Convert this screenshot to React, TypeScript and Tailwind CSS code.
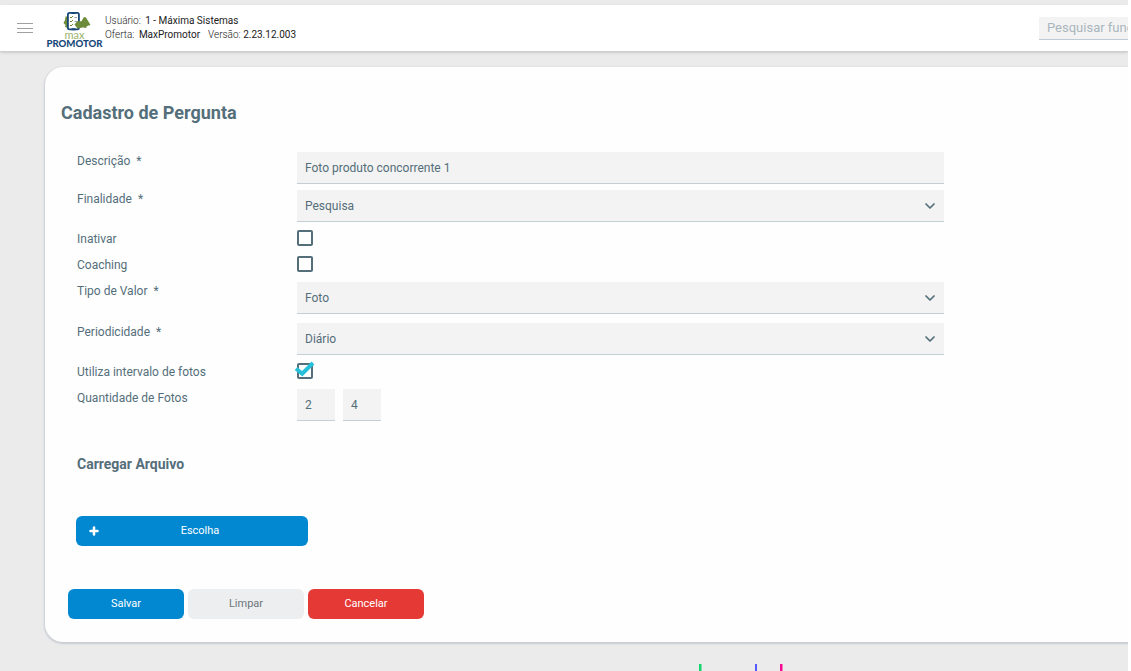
import React, { useState } from "react";
import { ChevronDown, Plus } from "lucide-react";

const fieldClass =
  "h-8 w-full appearance-none rounded-none border-0 border-b border-[#c3ced5] bg-[#f3f3f3] px-2 text-xs text-[#546e7a] outline-none";

type RowProps = {
  label: string;
  id: string;
  height: string;
  required?: boolean;
  children: React.ReactNode;
};

function Row({ label, id, height, required = false, children }: RowProps) {
  return (
    <div className={`flex items-start ${height}`}>
      <label htmlFor={id} className="w-[220px] shrink-0 pt-px text-xs leading-4 text-[#546e7a]">
        {label}
        {required && <span className="ml-1.5">*</span>}
      </label>
      <div className="flex min-w-0 flex-1 gap-2">{children}</div>
    </div>
  );
}

function Select({ id, options }: { id: string; options: string[] }) {
  return (
    <div className="relative w-full">
      <select id={id} className={fieldClass}>
        {options.map((option) => (
          <option key={option}>{option}</option>
        ))}
      </select>
      <ChevronDown className="pointer-events-none absolute top-2 right-1.5 size-4 text-[#546e7a]" strokeWidth={2.6} />
    </div>
  );
}

function Checkbox({ id, initial = false }: { id: string; initial?: boolean }) {
  const [checked, setChecked] = useState(initial);
  return (
    <div className="relative size-4">
      <input
        id={id}
        type="checkbox"
        checked={checked}
        onChange={(event) => setChecked(event.target.checked)}
        className="block size-4 appearance-none rounded-[2px] border-2 border-[#546e7a] bg-white"
      />
      {checked && (
        <svg viewBox="0 0 20 18" className="pointer-events-none absolute -top-0.5 -left-0.5 h-[18px] w-5" fill="none">
          <path d="M1 7.500 7.200 12.700 18 2" stroke="#26c0da" strokeWidth="4" />
        </svg>
      )}
    </div>
  );
}

function Logo() {
  return (
    <svg viewBox="0 0 58 40" className="h-10 w-[58px]" role="img" aria-label="max Promotor">
      <path d="M22 8.500h-2.500L19 12l-1.500 3 2 2-.5 2 3 1z" fill="#6d8c3a" />
      <path d="M31 13l4 1 3-5 2 .5L44.500 17 41 18l-1 2-5-1-4 1z" fill="#6d8c3a" />
      <rect x="21.900" y="4.900" width="11" height="16.500" rx="1.600" fill="#fff" stroke="#174779" strokeWidth="1.800" />
      <path d="M25.500 5h4M25.500 21.300h4" stroke="#174779" strokeWidth="2" />
      <path d="m24 9 1 1 2-2m-3 5 1 1 2-2m-3 5 1 1 2-2" fill="none" stroke="#6d8c3a" strokeWidth="1" />
      <path d="M28.500 9.500H31M28.500 13.500H31" stroke="#8aa0b8" strokeWidth="1" />
      <path d="m28.500 16.500 3-3.500 5 .5v6l-5 1z" fill="#6d8c3a" />
      <text x="28.500" y="31" textAnchor="middle" fontFamily="Lato, sans-serif" fontSize="11" fontWeight="400" fill="#9ab36b">
        max
      </text>
      <text x="28.500" y="39" textAnchor="middle" fontFamily="Lato, sans-serif" fontSize="9.600" fontWeight="900" fill="#174779">
        PROMOTOR
      </text>
    </svg>
  );
}

export default function App() {
  return (
    <div className="min-h-screen bg-white pr-[3px] font-[Roboto,sans-serif] text-[#546e7a]">
      <div className="flex min-h-screen flex-col overflow-hidden bg-[#ebebeb] pt-[5px]">
        <header className="flex h-[47px] shrink-0 items-center border-b border-[#cfcfcf] bg-white pl-4 shadow-sm">
          <button type="button" aria-label="Menu" className="flex h-6 w-[30px] items-center">
            <svg viewBox="0 0 17 10" className="h-2.5 w-[17px]" stroke="#a0a0a0" strokeWidth="1">
              <path d="M1 .5h16M1 5.500h16M1 9.500h16" />
            </svg>
          </button>
          <Logo />
          <div className="ml-px text-[10px] leading-[14px] whitespace-nowrap text-[#212121]">
            <p className="font-light">
              Usuário: <span className="ml-0.5 font-normal">1 - Máxima Sistemas</span>
            </p>
            <p className="font-light">
              Oferta: <span className="ml-0.5 font-normal">MaxPromotor</span>
              <span className="ml-2">Versão: </span>
              <span className="font-normal">2.23.12.003</span>
            </p>
          </div>
          <input
            type="text"
            aria-label="Pesquisar"
            placeholder="Pesquisar func"
            className="ml-auto h-[23px] w-[89px] border-b border-[#bccbd4] bg-[#f3f3f3] pl-2 text-[13px] outline-none placeholder:text-[#a9b6bd]"
          />
        </header>

        <main className="mt-[15px] ml-[45px] rounded-l-[18px] bg-[#fefefe] pt-[34px] pb-[23px] pl-4 shadow-[0_1px_2px_1px_#c8ccd2]">
          <h1 className="text-lg leading-6 font-bold">Cadastro de Pergunta</h1>
          <form onSubmit={(event) => event.preventDefault()}>
            <div className="mt-[27px] mr-[184px] ml-4">
              <Row label="Descrição" required id="descricao" height="h-[38px]">
                <input id="descricao" type="text" defaultValue="Foto produto concorrente 1" className={fieldClass} />
              </Row>
              <Row label="Finalidade" required id="finalidade" height="h-10">
                <Select id="finalidade" options={["Pesquisa"]} />
              </Row>
              <Row label="Inativar" id="inativar" height="h-[26px]">
                <Checkbox id="inativar" />
              </Row>
              <Row label="Coaching" id="coaching" height="h-[26px]">
                <Checkbox id="coaching" />
              </Row>
              <Row label="Tipo de Valor" required id="tipo" height="h-[41px]">
                <Select id="tipo" options={["Foto"]} />
              </Row>
              <Row label="Periodicidade" required id="periodicidade" height="h-10">
                <Select id="periodicidade" options={["Diário"]} />
              </Row>
              <Row label="Utiliza intervalo de fotos" id="intervalo" height="h-[26px]">
                <Checkbox id="intervalo" initial />
              </Row>
              <Row label="Quantidade de Fotos" id="quantidade" height="h-8">
                <div className="w-[38px]">
                  <input id="quantidade" type="text" defaultValue="2" className={fieldClass} />
                </div>
                <div className="w-[38px]">
                  <input aria-label="Quantidade máxima" type="text" defaultValue="4" className={fieldClass} />
                </div>
              </Row>
            </div>

            <h2 className="mt-[33px] ml-4 text-sm leading-5 font-bold">Carregar Arquivo</h2>
            <button
              type="button"
              className="mt-[42px] ml-[15px] flex h-[30px] w-[232px] items-center rounded-md bg-[#0288d1] px-3 text-[11px] text-white"
            >
              <Plus className="size-3" strokeWidth={5} />
              <span className="flex-1 pl-1 text-center">Escolha</span>
            </button>

            <div className="mt-[43px] ml-[7px] flex gap-1 text-[11px]">
              <button type="submit" className="h-[30px] w-[116px] rounded-md bg-[#0288d1] text-white">
                Salvar
              </button>
              <button type="reset" className="h-[30px] w-[116px] rounded-md bg-[#eceeef] text-[#6c757d]">
                Limpar
              </button>
              <button type="button" className="h-[30px] w-[116px] rounded-md bg-[#e53935] text-white">
                Cancelar
              </button>
            </div>
          </form>
        </main>

        <footer className="flex flex-1 items-end pl-[699px]">
          <svg viewBox="0 0 84 7" className="h-[7px] w-[84px]" aria-hidden="true">
            <path d="M0 0h2.500v7H0z" fill="#10d66b" />
            <path d="M56 0h2v7h-2z" fill="#5858ff" />
            <path d="M81 0h2.500v7H81z" fill="#f50a91" />
          </svg>
        </footer>
      </div>
    </div>
  );
}
